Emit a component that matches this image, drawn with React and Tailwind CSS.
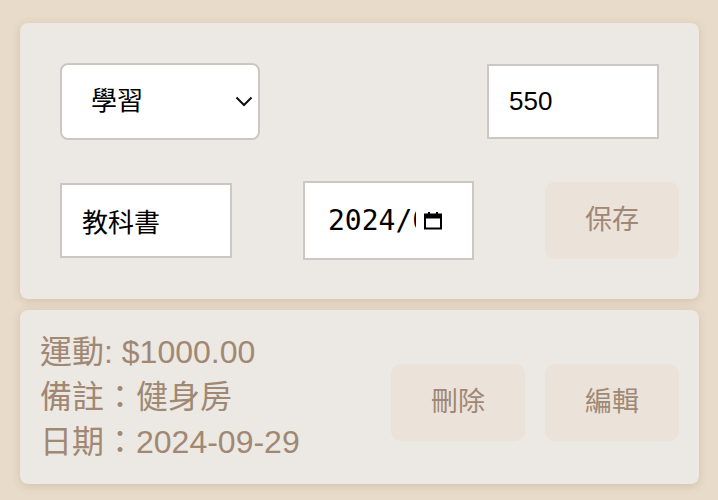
import React from 'react';

const font = { fontFamily: '"Liberation Sans", "Noto Sans CJK TC", sans-serif' };

const CalendarIcon = () => (
  <svg width="20" height="20" viewBox="0 0 20 20" className="shrink-0">
    <rect x="2" y="3.5" width="16" height="14" fill="none" stroke="#000" strokeWidth="2" />
    <rect x="2" y="3.5" width="16" height="4" fill="#000" />
    <rect x="5" y="1" width="2" height="4" fill="#000" />
    <rect x="13" y="1" width="2" height="4" fill="#000" />
  </svg>
);

const SoftButton = ({ children }) => (
  <button className="w-[134px] h-[77px] rounded-[10px] bg-[#ebe2d9] text-[#9f8875] text-[27px] flex items-center justify-center">
    {children}
  </button>
);

export default function App() {
  const records = [
    { category: '運動', amount: 1000, note: '健身房', date: '2024-09-29' },
  ];

  return (
    <div className="min-h-[500px] bg-[#e8dbc9] pt-[23px] pl-5 pr-[19px] pb-4 flex flex-col gap-[11px]" style={font}>
      {/* Form */}
      <div className="bg-[#ece8e3] rounded-lg shadow-[0_2px_8px_rgba(150,120,90,0.25)] pt-10 pb-[39px] pl-10 pr-5 flex flex-col gap-[41px]">
        <div className="flex items-center justify-between">
          <div className="relative w-[200px] h-[77px]">
            <select
              defaultValue="study"
              className="appearance-none w-full h-full bg-white border-2 border-[#ccc7c2] rounded-lg pl-[29px] text-[26px] text-black outline-none"
            >
              <option value="study">學習</option>
              <option value="sport">運動</option>
            </select>
            <svg className="absolute right-[7px] top-[30px] pointer-events-none" width="18" height="16" viewBox="0 0 18 16">
              <path d="M1.5 4.5 L9 12 L16.5 4.5" fill="none" stroke="#111" strokeWidth="2" />
            </svg>
          </div>
          <input
            type="text"
            defaultValue="550"
            className="w-[172px] h-[75px] mr-5 bg-white border-2 border-[#ccc7c2] pl-5 text-[26px] text-black outline-none"
          />
        </div>
        <div className="flex items-center justify-between">
          <input
            type="text"
            defaultValue="教科書"
            className="w-[172px] h-[75px] bg-white border-2 border-[#ccc7c2] pl-5 text-[26px] text-black outline-none"
          />
          <div className="w-[171px] h-[79px] bg-white border-2 border-[#ccc7c2] flex items-center pl-[23px] gap-[7px]">
            <span
              className="w-[88px] overflow-hidden whitespace-nowrap text-[28px] text-black"
              style={{ fontFamily: '"DejaVu Sans Mono", monospace' }}
            >
              2024/09/29
            </span>
            <CalendarIcon />
          </div>
          <SoftButton>保存</SoftButton>
        </div>
      </div>

      {/* Records */}
      {records.map((r, i) => (
        <div
          key={i}
          className="bg-[#ece8e3] rounded-lg shadow-[0_2px_8px_rgba(150,120,90,0.25)] py-5 pl-5 pr-5 flex items-center justify-between"
        >
          <div className="text-[32px] leading-[1.4] text-[#a08873]">
            <div>{r.category}: ${r.amount.toFixed(2)}</div>
            <div>備註：{r.note}</div>
            <div>日期：{r.date}</div>
          </div>
          <div className="flex gap-5 mt-[10px]">
            <SoftButton>刪除</SoftButton>
            <SoftButton>編輯</SoftButton>
          </div>
        </div>
      ))}
    </div>
  );
}
